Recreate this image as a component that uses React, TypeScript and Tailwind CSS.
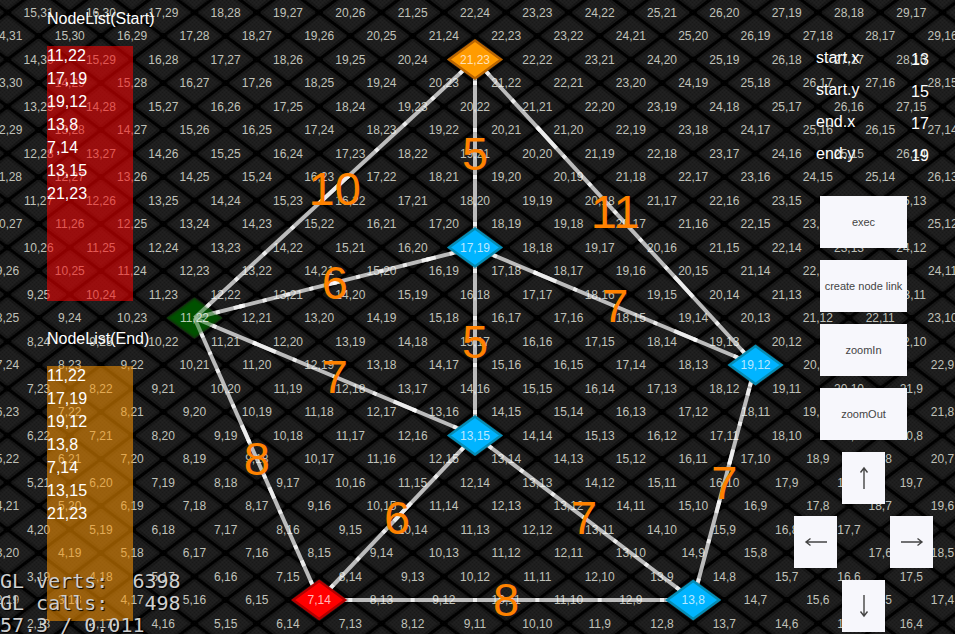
import { useEffect, useState } from "react";

type Cell = [number, number];
type Span = [number, number];

const COL = 31.17;
const ROW = 23.5;

// Grid coordinates to screen position (isometric projection).
const project = ([a, b]: Cell) => ({
  x: 475 + (a - b + 2) * COL,
  y: 59.5 + (44 - a - b) * ROW,
});

const diamond = (x: number, y: number, w: number, h: number) =>
  `${x - w},${y} ${x},${y - h} ${x + w},${y} ${x},${y + h}`;

const nodes: { at: Cell; fill: string; edge: string }[] = [
  { at: [11, 22], fill: "#004d00", edge: "#0c3a08" },
  { at: [17, 19], fill: "#00b4ff", edge: "#058cb4" },
  { at: [19, 12], fill: "#00b4ff", edge: "#058cb4" },
  { at: [13, 8], fill: "#00b4ff", edge: "#058cb4" },
  { at: [7, 14], fill: "#ff0000", edge: "#b40000" },
  { at: [13, 15], fill: "#00b4ff", edge: "#058cb4" },
  { at: [21, 23], fill: "#ff9b00", edge: "#b96400" },
];

const links: { from: Cell; to: Cell; weight: number; steps: number; half?: boolean; wide?: Span[] }[] = [
  { from: [11, 22], to: [21, 23], weight: 10, steps: 10, wide: [[0.45, 0.55]] },
  { from: [11, 22], to: [17, 19], weight: 6, steps: 6, half: true, wide: [[0.14, 0.18], [0.48, 0.52], [0.81, 0.86]] },
  { from: [11, 22], to: [13, 15], weight: 7, steps: 7, wide: [[0.21, 0.29], [0.71, 0.79]] },
  { from: [11, 22], to: [7, 14], weight: 8, steps: 8, wide: [[0.12, 0.13], [0.38, 0.44], [0.6, 0.64], [0.86, 0.88]] },
  { from: [21, 23], to: [17, 19], weight: 5, steps: 4 },
  { from: [21, 23], to: [19, 12], weight: 11, steps: 11, wide: [[0.22, 0.29], [0.71, 0.77]] },
  { from: [17, 19], to: [13, 15], weight: 5, steps: 4 },
  { from: [17, 19], to: [19, 12], weight: 7, steps: 7, wide: [[0.21, 0.29], [0.71, 0.79]] },
  { from: [19, 12], to: [13, 8], weight: 7, steps: 6, wide: [[0.1, 0.13], [0.36, 0.42], [0.58, 0.63]] },
  { from: [13, 15], to: [7, 14], weight: 6, steps: 6, wide: [[0.42, 0.52]] },
  { from: [13, 15], to: [13, 8], weight: 7, steps: 7 },
  { from: [7, 14], to: [13, 8], weight: 8, steps: 6 },
];

const nodeNames = ["11,22", "17,19", "19,12", "13,8", "7,14", "13,15", "21,23"];

const fields = [
  { name: "start.x", value: "13" },
  { name: "start.y", value: "15" },
  { name: "end.x", value: "17" },
  { name: "end.y", value: "19" },
];

const actions = ["exec", "create node link", "zoomIn", "zoomOut"];

function useWindowSize() {
  const read = () => ({ width: window.innerWidth, height: window.innerHeight });
  const [size, setSize] = useState(read);
  useEffect(() => {
    const update = () => setSize(read());
    window.addEventListener("resize", update);
    return () => window.removeEventListener("resize", update);
  }, []);
  return size;
}

function Link({ link }: { link: (typeof links)[number] }) {
  const p = project(link.from);
  const q = project(link.to);
  const length = Math.hypot(q.x - p.x, q.y - p.y);
  const spans: Span[] = [...(link.wide ?? [])];
  const pad = 2 / length;
  for (let k = 0; k < link.steps; k++) {
    const t = (k + 0.5) / link.steps;
    spans.push([t - pad, t + pad]);
    if (link.half && k > 0) spans.push([k / link.steps - pad, k / link.steps + pad]);
  }
  const at = (t: number) => ({ x: p.x + (q.x - p.x) * t, y: p.y + (q.y - p.y) * t });
  return (
    <g stroke="#fff" strokeWidth={4}>
      <line x1={p.x} y1={p.y} x2={q.x} y2={q.y} strokeOpacity={0.7} />
      {spans.map(([s, e], i) => {
        const a = at(s);
        const b = at(e);
        return <line key={i} x1={a.x} y1={a.y} x2={b.x} y2={b.y} strokeOpacity={0.75} />;
      })}
    </g>
  );
}

function NodeShape({ node }: { node: (typeof nodes)[number] }) {
  const { x, y } = project(node.at);
  return <polygon points={diamond(x, y, 26, 19)} fill={node.fill} stroke={node.edge} strokeWidth={2.500} />;
}

function GraphCanvas() {
  const { width, height } = useWindowSize();
  const cells: Cell[] = [];
  const sumMin = Math.floor(44 - (height - 54.5) / ROW);
  for (let sum = sumMin; sum <= 46; sum++) {
    for (let a = -60; a <= 90; a++) {
      const cell: Cell = [a, sum - a];
      const { x, y } = project(cell);
      if (x > -20 && x < width + 20 && y > 0 && y < height + 5) cells.push(cell);
    }
  }
  const isNode = (c: Cell) => nodes.some((n) => n.at[0] === c[0] && n.at[1] === c[1]);
  const [startNode, ...otherNodes] = nodes;
  const start = project(startNode.at);

  return (
    <svg className="absolute inset-0 h-full w-full" aria-label="node graph">
      <defs>
        <pattern id="tile" x={475 - COL} y={59.5 - ROW} width={COL * 2} height={ROW * 2} patternUnits="userSpaceOnUse">
          <rect width={COL * 2} height={ROW * 2} fill="#1e1e1e" />
          <path d={`M0 ${ROW}L${COL} 0L${COL * 2} ${ROW}L${COL} ${ROW * 2}Z`} fill="none" stroke="#171717" strokeWidth={8} />
          <path d={`M0 ${ROW}L${COL} 0L${COL * 2} ${ROW}L${COL} ${ROW * 2}Z`} fill="none" stroke="#000" strokeWidth={3} />
          <g fill="#000">
            <ellipse cx={0} cy={ROW} rx={4} ry={3} />
            <ellipse cx={COL * 2} cy={ROW} rx={4} ry={3} />
            <ellipse cx={COL} cy={0} rx={4} ry={3} />
            <ellipse cx={COL} cy={ROW * 2} rx={4} ry={3} />
          </g>
        </pattern>
        <pattern id="grain" width={4} height={4} patternUnits="userSpaceOnUse">
          <path d="M0 0h1v1h-1zM2 2h1v1h-1z" fill="#fff" fillOpacity={0.02} />
          <path d="M2 0h1v1h-1zM0 2h1v1h-1z" fill="#000" fillOpacity={0.2} />
        </pattern>
      </defs>
      <rect width="100%" height="100%" fill="url(#tile)" />
      <rect width="100%" height="100%" fill="url(#grain)" />

      <g className="font-['Liberation_Sans',Arial,sans-serif] text-[12px]" fill="#c0c2ba" textAnchor="middle">
        {cells
          .filter((c) => !isNode(c))
          .map((c) => {
            const { x, y } = project(c);
            return (
              <text key={c.join()} x={x} y={y + 4}>
                {c.join(",")}
              </text>
            );
          })}
      </g>

      <NodeShape node={startNode} />
      <g>
        {links.map((link, i) => (
          <Link key={i} link={link} />
        ))}
      </g>
      <polygon points={diamond(start.x, start.y, 26, 19)} fill="#005a00" fillOpacity={0.38} />
      {otherNodes.map((n) => (
        <NodeShape key={n.at.join()} node={n} />
      ))}

      <g className="font-['Liberation_Sans',Arial,sans-serif] text-[12px]" fill="#fff" fillOpacity={0.72} textAnchor="middle">
        {nodes.map((n) => {
          const { x, y } = project(n.at);
          return (
            <text key={n.at.join()} x={x} y={y + 4}>
              {n.at.join(",")}
            </text>
          );
        })}
      </g>

      <g
        className="font-['Liberation_Sans',Arial,sans-serif] text-[47px]"
        fill="#ff8200"
        textAnchor="middle"
      >
        {links.map((link, i) => {
          const p = project(link.from);
          const q = project(link.to);
          return (
            <text key={i} x={(p.x + q.x) / 2} y={(p.y + q.y) / 2 + 16}>
              {link.weight}
            </text>
          );
        })}
      </g>
    </svg>
  );
}

function NodeList({ title, tint }: { title: string; tint: string }) {
  return (
    <section>
      <h2 className="text-[16px] leading-[26px] whitespace-nowrap">{title}</h2>
      <div className={`mt-[14px] flex h-[255px] w-[86px] flex-col ${tint}`}>
        <ul className="-mt-0.5 text-[16px] leading-[23px]">
          {nodeNames.map((name) => (
            <li key={name}>{name}</li>
          ))}
        </ul>
      </div>
    </section>
  );
}

const padButton = "flex h-[52px] items-center justify-center bg-[#f7f7fc] text-[#444]";

function ArrowButton({ label, turn, place }: { label: string; turn: number; place: string }) {
  return (
    <button type="button" aria-label={label} className={`${padButton} ${place}`}>
      <svg width="24" height="24" viewBox="0 0 24 24" fill="none" stroke="#444" strokeWidth="1.400">
        <g transform={`rotate(${turn} 12 12)`}>
          <path d="M12 23V2M8.500 6.500L12 2L15.500 6.500" />
        </g>
      </svg>
    </button>
  );
}

export default function App() {
  return (
    <main className="relative flex min-h-screen justify-between overflow-hidden bg-black font-['Liberation_Sans',Arial,sans-serif] text-white">
      <GraphCanvas />

      <div className="relative flex flex-col gap-[25px] pt-[6px] pl-[47px]">
        <NodeList title="NodeList(Start)" tint="bg-[#ff0000]/55" />
        <NodeList title="NodeList(End)" tint="bg-[#ff9600]/55" />
      </div>

      <aside className="relative flex flex-col pt-[42px] pr-[22px]">
        <form className="pl-[22px] text-[16px]">
          {fields.map((f) => (
            <div key={f.name} className="flex h-8 items-center justify-between">
              <label htmlFor={f.name}>{f.name}</label>
              <input id={f.name} defaultValue={f.value} className="w-[22px] bg-transparent pt-1 outline-none" />
            </div>
          ))}
        </form>
        <div className="mx-auto mt-[26px] flex w-[87px] flex-col gap-3">
          {actions.map((a) => (
            <button key={a} type="button" className={`${padButton} text-[11px] whitespace-nowrap`}>
              {a}
            </button>
          ))}
        </div>
        <div className="mt-3 grid grid-cols-[43px_43px_43px] gap-x-[5px] gap-y-3">
          <ArrowButton label="up" turn={0} place="col-start-2" />
          <ArrowButton label="left" turn={270} place="col-start-1 row-start-2" />
          <ArrowButton label="right" turn={90} place="col-start-3 row-start-2" />
          <ArrowButton label="down" turn={180} place="col-start-2 row-start-3" />
        </div>
      </aside>

      <pre className="absolute -bottom-0.5 left-0 font-['DejaVu_Sans_Mono',monospace] text-[20px] leading-[22px] text-[#cfcfcf] [text-shadow:1px_1px_1px_#000]">
        {"GL verts:  6398\nGL calls:   498\n57.3 / 0.011"}
      </pre>
    </main>
  );
}
